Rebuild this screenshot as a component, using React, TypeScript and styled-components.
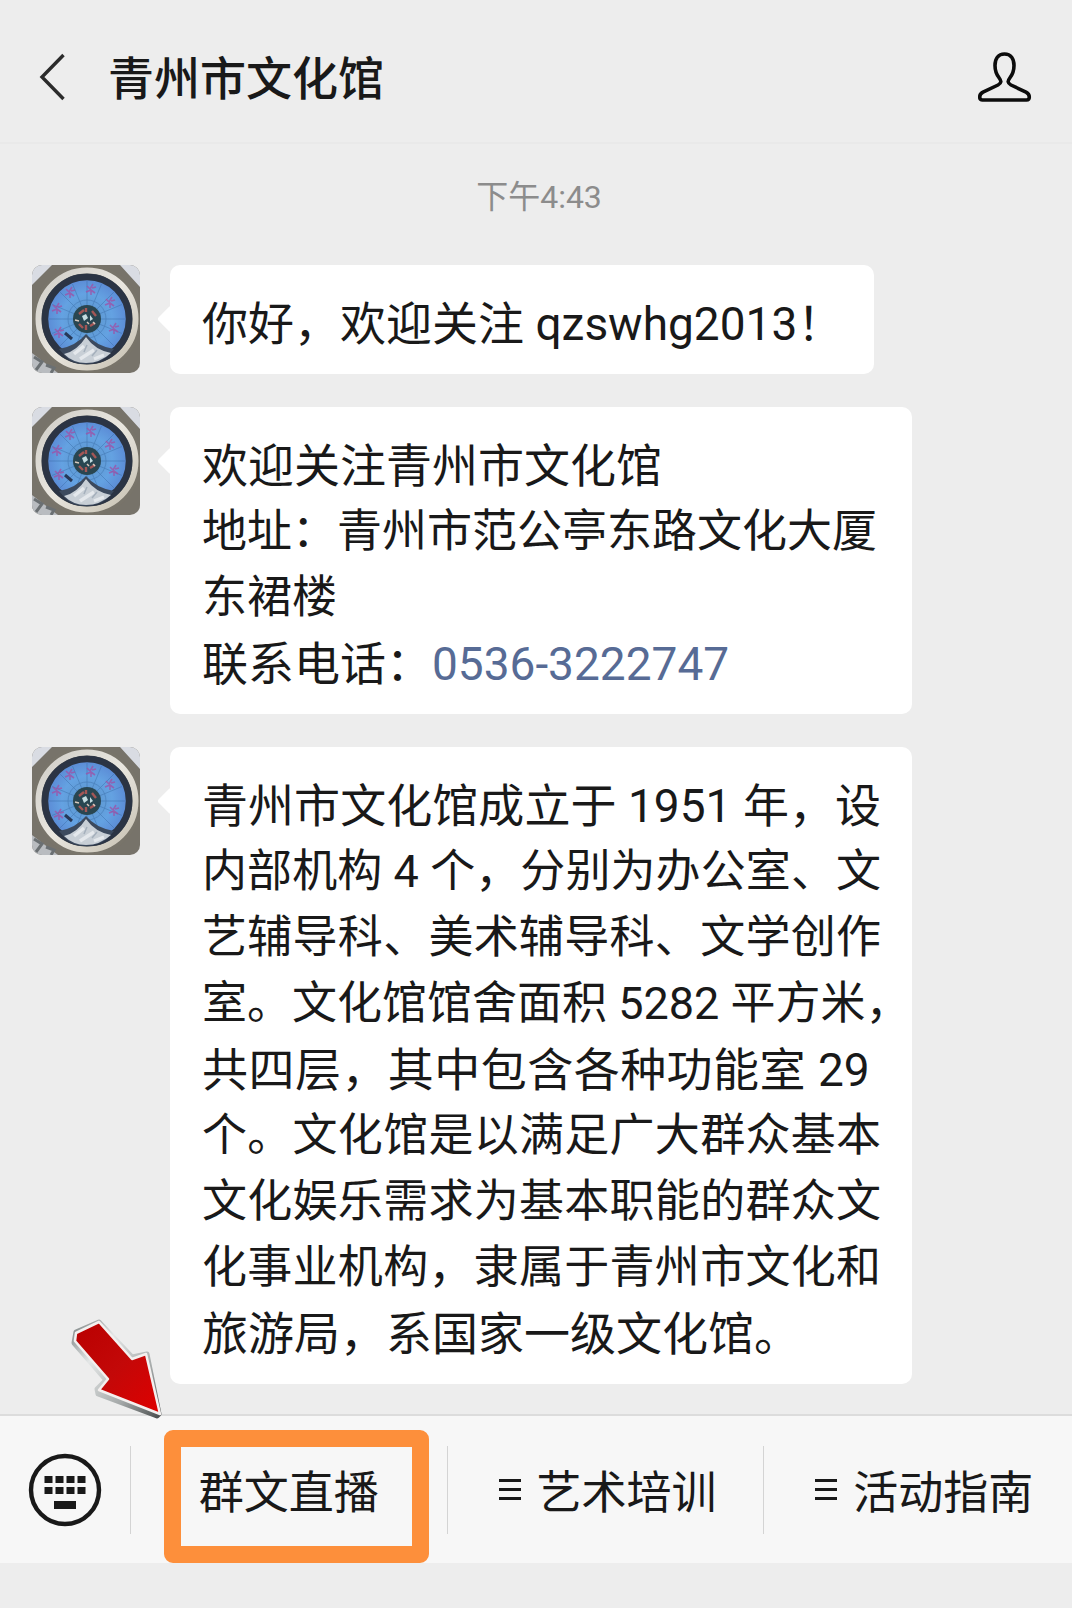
import React from "react";
import styled, { createGlobalStyle, css } from "styled-components";

const GlobalStyle = createGlobalStyle`
  * { box-sizing: border-box; }
  body {
    margin: 0;
    background: #ededed;
    color: #191919;
    font-family: Roboto, "Noto Sans CJK SC", sans-serif;
  }
  button {
    margin: 0;
    padding: 0;
    border: 0;
    background: none;
    color: inherit;
    font: inherit;
    cursor: pointer;
  }
  svg { display: block; }
`;

const Screen = styled.div`
  display: flex;
  flex-direction: column;
  min-height: 100vh;
  padding-bottom: 45px;
`;

const Header = styled.header`
  display: flex;
  align-items: center;
  height: 144px;
  padding: 12px 40px 0 38px;
  border-bottom: 2px solid #e9e9e9;
`;

const Title = styled.h1`
  flex: 1;
  margin: 0 0 0 40px;
  padding-top: 4px;
  font-size: 46px;
  line-height: 66px;
  font-weight: 500;
`;

const Chat = styled.main`
  flex: 1;
  display: flex;
  flex-direction: column;
  gap: 33px;
  padding: 31px 32px 28px;
`;

const Time = styled.time`
  align-self: center;
  margin-bottom: 13px;
  padding-left: 6px;
  font-size: 32px;
  line-height: 44px;
  color: #8c8c8c;
`;

const Message = styled.article`
  display: flex;
  align-items: flex-start;
  gap: 30px;
`;

const AvatarFrame = styled.div`
  flex: none;
  width: 108px;
  height: 108px;
  border-radius: 10px;
  overflow: hidden;
`;

const Bubble = styled.div`
  position: relative;
  max-width: 742px;
  padding: 26px 31px 17px 32px;
  border-radius: 10px;
  background: #fff;
  font-size: 46px;
  line-height: 66px;

  &::before {
    content: "";
    position: absolute;
    left: -9px;
    top: 44px;
    width: 20px;
    height: 20px;
    border-radius: 3px;
    background: #fff;
    transform: rotate(45deg);
  }
`;

const Paragraph = styled.p<{ $dense?: boolean }>`
  margin: 0;
  font-size: ${({ $dense }) => ($dense ? "45px" : "46px")};
`;

const Line = styled.span<{ $dense?: boolean; $last?: boolean }>`
  display: block;
  height: 66px;
  font-size: ${({ $dense }) => ($dense ? "45px" : "46px")};
  text-align-last: ${({ $last }) => ($last ? "left" : "justify")};
  white-space: nowrap;
`;

const PhoneLink = styled.a`
  color: #576b95;
  text-decoration: none;
`;

const Footer = styled.footer`
  display: flex;
  height: 149px;
  border-top: 2px solid #dcdcdc;
  background: #f7f7f7;
  overflow-x: clip;
`;

const KeyboardButton = styled.button`
  flex: none;
  display: flex;
  align-items: center;
  justify-content: center;
  width: 130px;
`;

const Menu = styled.nav`
  flex: 1;
  display: flex;
  align-items: center;
  margin-right: -8px;
`;

const MenuCell = styled.div<{ $marked?: boolean }>`
  position: relative;
  flex: 1;
  align-self: stretch;
  display: flex;
  align-items: center;

  ${({ $marked }) =>
    $marked &&
    css`
      &::after {
        content: "";
        position: absolute;
        inset: 14px 18px 0 34px;
        border: 17px solid #fd8f3b;
        border-radius: 9px;
        pointer-events: none;
      }
    `}
`;

const MenuButton = styled.button<{ $listed?: boolean }>`
  flex: 1;
  display: flex;
  align-items: center;
  justify-content: center;
  gap: 16px;
  height: 88px;
  padding-left: ${({ $listed }) => ($listed ? "4px" : "0")};
  border-left: 1px solid #d4d4d4;
  font-size: 45px;
  line-height: 66px;
  white-space: nowrap;
`;

const MenuLabel = styled.span`
  padding-top: 8px;
`;

const Pointer = styled.svg`
  position: absolute;
  left: -80px;
  top: -116px;
  pointer-events: none;
`;

const BackIcon = () => (
  <svg width="30" height="48" viewBox="0 0 30 48" fill="none" stroke="#2b2b2b" strokeWidth="3.400">
    <path d="M25.500 2 4 24l21.500 22" />
  </svg>
);

const PersonIcon = () => (
  <svg width="54" height="52" viewBox="0 0 54 52" fill="none" stroke="#0c0c0c" strokeWidth="3.600" strokeLinejoin="round">
    <path d="M26.500 3C20 3 17 8 17 14.500c0 5 1.700 9.300 4.200 12.500 2.300 3 2.400 5-1.200 7L5 41.200c-2.500 1.300-3.300 2.600-3.300 4.800 0 2 .9 3 2.800 3h44c1.900 0 2.800-1 2.800-3 0-2.200-.8-3.500-3.300-4.800L33 34c-3.600-2-3.500-4-1.200-7 2.500-3.200 4.200-7.500 4.200-12.500C36 8 33 3 26.500 3Z" />
  </svg>
);

const KeyboardIcon = () => (
  <svg width="74" height="74" viewBox="0 0 74 74" fill="#191919">
    <circle cx="37" cy="37" r="34" fill="none" stroke="#191919" strokeWidth="4.400" />
    {[23, 34].map((y) =>
      [16.500, 27.500, 38.500, 49.500].map((x) => <rect key={`${x}-${y}`} x={x} y={y} width="8" height="7" />)
    )}
    <rect x="26" y="48" width="22" height="8" />
  </svg>
);

const ListIcon = () => (
  <svg width="22" height="22" viewBox="0 0 22 22" fill="#191919">
    <rect y="0" width="22" height="3" />
    <rect y="9" width="22" height="3" />
    <rect y="18" width="22" height="3" />
  </svg>
);

const blossoms = [
  [27, 67],
  [25, 43],
  [38, 27],
  [59, 24],
  [78, 37],
  [82, 63],
];

const Avatar = () => (
  <AvatarFrame>
    <svg width="108" height="108" viewBox="0 0 108 108" role="img" aria-label="青州市文化馆">
      <defs>
        <radialGradient id="dial">
          <stop offset="0" stopColor="#5a93c8" />
          <stop offset="0.600" stopColor="#64a2e2" />
          <stop offset="1" stopColor="#5a88d4" />
        </radialGradient>
        <linearGradient id="rim" x1="0" y1="0" x2="1" y2="1">
          <stop offset="0" stopColor="#cfcdc7" />
          <stop offset="0.500" stopColor="#e9e6df" />
          <stop offset="1" stopColor="#c5bfb0" />
        </linearGradient>
      </defs>
      <rect width="108" height="108" fill="#77736a" />
      <path d="M0 0h20L0 20ZM88 0h20v22Z" fill="#d9dce3" />
      <path d="M0 88l26 20H0Z" fill="#b9bcc0" />
      <path d="M2 92l8 5-6 8M14 100l8 3-3 5" stroke="#6b7073" strokeWidth="3" fill="none" />
      <circle cx="55" cy="54" r="55" fill="#78746a" />
      <circle cx="55" cy="54" r="48.500" fill="#454b50" stroke="url(#rim)" strokeWidth="6" />
      <circle cx="55" cy="54" r="42" fill="url(#dial)" stroke="#2b3444" strokeWidth="6.500" />
      <g stroke="#3868a2" strokeWidth="0.700" fill="none" opacity="0.600">
        {Array.from({ length: 16 }, (_, i) => {
          const a = (i * Math.PI) / 8;
          return <path key={i} d={`M${55 + 14 * Math.cos(a)} ${54 + 14 * Math.sin(a)}L${55 + 38 * Math.cos(a)} ${54 + 38 * Math.sin(a)}`} />;
        })}
        <circle cx="55" cy="54" r="19" />
      </g>
      {blossoms.map(([x, y]) => (
        <g key={`${x}-${y}`} stroke="#a04fa4" strokeWidth="1.600" fill="none" opacity="0.750">
          <path d={`M${x - 4} ${y - 3}l3 3 3-5M${x - 5} ${y + 3}l5-2 4 3M${x + 1} ${y - 1}l4-1M${x} ${y + 1}v5`} />
        </g>
      ))}
      <circle cx="55" cy="54" r="14" fill="#294651" />
      <path d="M47 49l5-4M60 46l4 5M47 59l4 4M58 61l5-3M54 43v4M54 60v5" stroke="#a45756" strokeWidth="2.400" />
      <path d="M50 51l4-2 2 4-4 3ZM58 50l3 4-3 2Z" fill="#c5dce0" />
      <path d="M43 55l4 1M55 57l2 2M61 57l2 2" stroke="#d9c9bd" strokeWidth="1.500" />
      <path d="M33 68l7 6" stroke="#273857" strokeWidth="3" />
      <path d="M27 84q17-3 27-15 10 12 28 15L76 91Q66 99 54 99 40 99 33 91Z" fill="#3c4a5e" />
      <path d="M32 89q13-3 22-17 9 13 25 16Q68 98 54 98 41 98 32 89Z" fill="#c8cfd6" />
      <path d="M42 89l10-8M48 94l14-9M62 94l10-4" stroke="#e4e8ec" strokeWidth="3.500" />
      <path d="M55 80l-3 7M65 85l-5 6" stroke="#a5b0bc" strokeWidth="1.500" />
    </svg>
  </AvatarFrame>
);

const RedArrow = () => (
  <Pointer width="130" height="130" viewBox="0 0 130 130" aria-hidden="true">
    <defs>
      <linearGradient id="arrowFace" x1="0" y1="0" x2="1" y2="1">
        <stop offset="0" stopColor="#b90000" />
        <stop offset="0.500" stopColor="#c30808" />
        <stop offset="1" stopColor="#df0000" />
      </linearGradient>
      <linearGradient id="arrowSide" x1="0" y1="0" x2="1" y2="1">
        <stop offset="0" stopColor="#7d8484" />
        <stop offset="0.300" stopColor="#e4e7e7" />
        <stop offset="0.700" stopColor="#a5a9a9" />
        <stop offset="1" stopColor="#4e5252" />
      </linearGradient>
    </defs>
    <path
      d="M26 32 49 22 82 57 97 54 109 114 107 116 48 94 47 89 56 80 24 43Z"
      fill="url(#arrowSide)"
      stroke="url(#arrowSide)"
      strokeWidth="5"
      strokeLinejoin="round"
    />
    <path
      d="M26 33 49 22 82 59 96 54 110 114 49 90 58 79 25 41Z"
      fill="url(#arrowFace)"
      stroke="#f4f0ef"
      strokeWidth="2.500"
      strokeLinejoin="round"
    />
  </Pointer>
);

const App = () => (
  <>
    <GlobalStyle />
    <Screen>
      <Header>
        <button type="button" aria-label="返回">
          <BackIcon />
        </button>
        <Title>青州市文化馆</Title>
        <button type="button" aria-label="资料">
          <PersonIcon />
        </button>
      </Header>

      <Chat>
        <Time>下午4:43</Time>
        <Message>
          <Avatar />
          <Bubble>
            <Paragraph>你好，欢迎关注 qzswhg2013！</Paragraph>
          </Bubble>
        </Message>
        <Message>
          <Avatar />
          <Bubble>
            <Paragraph>欢迎关注青州市文化馆</Paragraph>
            <Paragraph $dense>地址：青州市范公亭东路文化大厦东裙楼</Paragraph>
            <Paragraph>
              联系电话：<PhoneLink href="tel:0536-3222747">0536-3222747</PhoneLink>
            </Paragraph>
          </Bubble>
        </Message>
        <Message>
          <Avatar />
          <Bubble>
            <Paragraph>
              <Line>青州市文化馆成立于 1951 年，设</Line>
              <Line $dense>内部机构 4 个，分别为办公室、文</Line>
              <Line $dense>艺辅导科、美术辅导科、文学创作</Line>
              <Line $dense>室。文化馆馆舍面积 5282 平方米，</Line>
              <Line>共四层，其中包含各种功能室 29&nbsp;</Line>
              <Line $dense>个。文化馆是以满足广大群众基本</Line>
              <Line $dense>文化娱乐需求为基本职能的群众文</Line>
              <Line $dense>化事业机构，隶属于青州市文化和</Line>
              <Line $last>旅游局，系国家一级文化馆。</Line>
            </Paragraph>
          </Bubble>
        </Message>
      </Chat>

      <Footer>
        <KeyboardButton type="button" aria-label="键盘">
          <KeyboardIcon />
        </KeyboardButton>
        <Menu>
          <MenuCell $marked>
            <MenuButton type="button">
              <MenuLabel>群文直播</MenuLabel>
            </MenuButton>
            <RedArrow />
          </MenuCell>
          <MenuCell>
            <MenuButton type="button" $listed>
              <ListIcon />
              <MenuLabel>艺术培训</MenuLabel>
            </MenuButton>
          </MenuCell>
          <MenuCell>
            <MenuButton type="button" $listed>
              <ListIcon />
              <MenuLabel>活动指南</MenuLabel>
            </MenuButton>
          </MenuCell>
        </Menu>
      </Footer>
    </Screen>
  </>
);

export default App;
